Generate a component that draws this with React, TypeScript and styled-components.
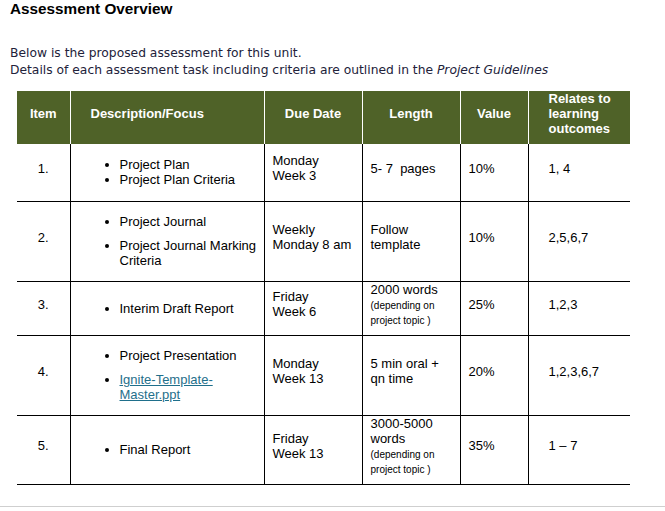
import React from "react";
import styled, { createGlobalStyle } from "styled-components";

const Global = createGlobalStyle`
  html, body { margin: 0; padding: 0; background: #fff; }
  body { font-family: "Liberation Sans", Arial, sans-serif; color: #000; }
`;

const Page = styled.div`
  display: flex;
  flex-direction: column;
  width: 665px;
`;

const Title = styled.h1`
  margin: 0;
  padding-left: 10px;
  font-family: "Liberation Sans", Arial, sans-serif;
  font-weight: bold;
  font-size: 15.3px;
  line-height: 18px;
  color: #000;
`;

const Intro = styled.p`
  margin: 27px 0 0;
  padding-left: 10px;
  font-family: "DejaVu Sans", sans-serif;
  font-size: 12.3px;
  line-height: 17px;
  color: #22223a;
  em { font-style: italic; }
`;

const Table = styled.table`
  margin: 12px 0 0 17px;
  border-collapse: collapse;
  table-layout: fixed;
  width: 613px;
  font-family: "Liberation Sans", Arial, sans-serif;
  font-size: 13px;
  line-height: 15px;
`;

const HeadRow = styled.tr`
  height: 53px;
`;

const HeadCell = styled.th<{ $align?: "left" | "center"; $pl?: number }>`
  background: #4f6228;
  color: #fff;
  font-weight: bold;
  padding: 0 4px 8px ${(p) => p.$pl ?? 4}px;
  text-align: ${(p) => p.$align ?? "center"};
  vertical-align: middle;
  border-left: 1px solid #fff;
  &:first-child { border-left: none; }
`;

const Row = styled.tr<{ $h: number }>`
  height: ${(p) => p.$h}px;
`;

const Cell = styled.td<{ $align?: "left" | "center"; $pl?: number; $centered?: boolean }>`
  padding: 0 4px ${(p) => (p.$centered ? 0 : 8)}px ${(p) => p.$pl ?? 8}px;
  text-align: ${(p) => p.$align ?? "left"};
  vertical-align: middle;
  border-bottom: 1px solid #000;
  border-left: 1px solid #000;
  color: #000;
  &:first-child { border-left: none; }
`;

const List = styled.ul<{ $spaced?: boolean }>`
  margin: 0;
  padding-left: 44px;
  list-style: disc;
  li + li { margin-top: ${(p) => (p.$spaced ? 9 : 0)}px; }
`;

const Small = styled.span`
  font-size: 10px;
  line-height: 1;
`;

const Link = styled.a`
  color: #1f6f8b;
  text-decoration: underline;
`;

const Divider = styled.div`
  margin-top: 21px;
  height: 1px;
  background: #cfcfcf;
  width: 665px;
`;

export default function App() {
  return (
    <>
      <Global />
      <Page>
        <Title>Assessment Overview</Title>
        <Intro>
          Below is the proposed assessment for this unit.
          <br />
          Details of each assessment task including criteria are outlined in the <em>Project Guidelines</em>
        </Intro>
        <Table>
          <colgroup>
            <col style={{ width: 53 }} />
            <col style={{ width: 194 }} />
            <col style={{ width: 98 }} />
            <col style={{ width: 98 }} />
            <col style={{ width: 68 }} />
            <col style={{ width: 102 }} />
          </colgroup>
          <thead>
            <HeadRow>
              <HeadCell>Item</HeadCell>
              <HeadCell $align="left" $pl={20}>Description/Focus</HeadCell>
              <HeadCell>Due Date</HeadCell>
              <HeadCell>Length</HeadCell>
              <HeadCell>Value</HeadCell>
              <HeadCell $align="left" $pl={20}>Relates to learning outcomes</HeadCell>
            </HeadRow>
          </thead>
          <tbody>
            <Row $h={57}>
              <Cell $align="center" $pl={4}>1.</Cell>
              <Cell $centered $pl={5}>
                <List>
                  <li>Project Plan</li>
                  <li>Project Plan Criteria</li>
                </List>
              </Cell>
              <Cell>Monday<br />Week 3</Cell>
              <Cell>5- 7{"\u00a0"} pages</Cell>
              <Cell>10%</Cell>
              <Cell $pl={20}>1, 4</Cell>
            </Row>
            <Row $h={80}>
              <Cell $align="center" $pl={4}>2.</Cell>
              <Cell $centered $pl={5}>
                <List $spaced>
                  <li>Project Journal</li>
                  <li>Project Journal Marking Criteria</li>
                </List>
              </Cell>
              <Cell>Weekly<br />Monday 8 am</Cell>
              <Cell>Follow<br />template</Cell>
              <Cell>10%</Cell>
              <Cell $pl={20}>2,5,6,7</Cell>
            </Row>
            <Row $h={54}>
              <Cell $align="center" $pl={4}>3.</Cell>
              <Cell $centered $pl={5}>
                <List>
                  <li>Interim Draft Report</li>
                </List>
              </Cell>
              <Cell>Friday<br />Week 6</Cell>
              <Cell>
                2000 words<br />
                <Small>(depending on</Small><br />
                <Small>project topic )</Small>
              </Cell>
              <Cell>25%</Cell>
              <Cell $pl={20}>1,2,3</Cell>
            </Row>
            <Row $h={80}>
              <Cell $align="center" $pl={4}>4.</Cell>
              <Cell $centered $pl={5}>
                <List $spaced>
                  <li>Project Presentation</li>
                  <li><Link href="#">Ignite-Template-Master.ppt</Link></li>
                </List>
              </Cell>
              <Cell>Monday<br />Week 13</Cell>
              <Cell>5 min oral +<br />qn time</Cell>
              <Cell>20%</Cell>
              <Cell $pl={20}>1,2,3,6,7</Cell>
            </Row>
            <Row $h={69}>
              <Cell $align="center" $pl={4}>5.</Cell>
              <Cell $centered $pl={5}>
                <List>
                  <li>Final Report</li>
                </List>
              </Cell>
              <Cell>Friday<br />Week 13</Cell>
              <Cell>
                3000-5000<br />words<br />
                <Small>(depending on</Small><br />
                <Small>project topic )</Small>
              </Cell>
              <Cell>35%</Cell>
              <Cell $pl={20}>1 – 7</Cell>
            </Row>
          </tbody>
        </Table>
        <Divider />
      </Page>
    </>
  );
}
